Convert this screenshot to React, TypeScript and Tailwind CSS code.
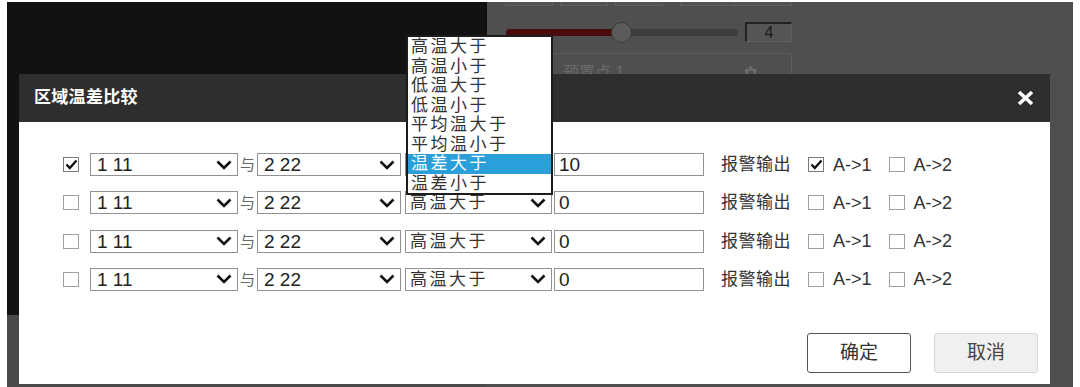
import React from 'react';

const Chevron = () => (
  <svg width="16" height="10" viewBox="0 0 16 10" className="shrink-0">
    <polyline points="1.5,1.5 8,8 14.5,1.5" fill="none" stroke="#111" strokeWidth="2.6" strokeLinejoin="miter" />
  </svg>
);

const Checkbox = ({ checked, className }: { checked?: boolean; className?: string }) => (
  <div
    className={`w-[16px] h-[15px] shrink-0 bg-white border flex items-center justify-center ${
      checked ? 'border-[#7a7a7a]' : 'border-[#a0a0a0]'
    } ${className ?? ''}`}
  >
    {checked && (
      <svg width="13" height="11" viewBox="0 0 13 11">
        <polyline points="1.5,5.5 4.8,9 11.5,1.5" fill="none" stroke="#111" strokeWidth="2.3" />
      </svg>
    )}
  </div>
);

const Select = ({ text, cjk, className }: { text: string; cjk?: boolean; className?: string }) => (
  <div
    className={`h-[23px] shrink-0 bg-white border border-[#929292] flex items-center justify-between pr-[5px] ${
      cjk ? 'pl-[4px] text-[17px] tracking-[2.5px] text-[#333]' : 'pl-[6px] text-[19px] text-[#222]'
    } ${className ?? ''}`}
  >
    <span className="leading-none whitespace-nowrap">{text}</span>
    <Chevron />
  </div>
);

const OPTIONS = ['高温大于', '高温小于', '低温大于', '低温小于', '平均温大于', '平均温小于', '温差大于', '温差小于'];

const ROWS = [
  { checked: true, op: '温差大于', value: '10', a1: true },
  { checked: false, op: '高温大于', value: '0', a1: false },
  { checked: false, op: '高温大于', value: '0', a1: false },
  { checked: false, op: '高温大于', value: '0', a1: false },
];

export default function App() {
  return (
    <div className="relative w-[1080px] h-[387px] overflow-hidden bg-white pt-[2px] px-[7px] font-['Liberation_Sans','Noto_Sans_CJK_SC',sans-serif]">
      {/* background screen */}
      <div className="flex h-full">
        <div className="w-[480px] flex flex-col">
          <div className="h-[313px] bg-[#121212]" />
          <div className="flex-1 bg-[#4a4a4a]" />
        </div>
        <div className="flex-1 bg-[#4f4f4f] flex flex-col">
          <div className="flex h-[4px] pl-[18px]">
            <div className="w-[48px] h-[4px] border border-t-0 border-[#5f5f5f] bg-[#535353]" />
            <div className="ml-[7px] w-[48px] h-[4px] border border-t-0 border-[#5f5f5f] bg-[#535353]" />
            <div className="ml-[7px] w-[48px] h-[4px] border border-t-0 border-[#5f5f5f] bg-[#535353]" />
            <div className="ml-[17px] w-[112px] h-[4px] flex">
              <div className="w-[55px] h-[4px] border border-t-0 border-[#5f5f5f] bg-[#535353]" />
              <div className="w-[57px] h-[4px] border border-t-0 border-l-0 border-[#5f5f5f] bg-[#535353]" />
            </div>
          </div>
          <div className="mt-[16px] h-[20px] flex items-center pl-[19px]">
            <div className="relative w-[232px] h-[7px] rounded-full bg-[#3d3d3d]">
              <div className="h-full w-[112px] rounded-l-full bg-[#4b0b0e]" />
              <div className="absolute left-[105px] top-[-7px] w-[21px] h-[21px] rounded-full bg-[#5b5b5b] border border-[#3b3b3b]" />
            </div>
            <div className="ml-[7px] w-[47px] h-[20px] border-t-2 border-l-2 border-t-[#222] border-l-[#222] border-r border-b border-r-[#5f5f5f] border-b-[#5f5f5f] bg-[#555] text-[#1a1a1a] text-[16px] leading-[17px] text-center">
              4
            </div>
          </div>
          <div className="mt-[11px] ml-[65px] w-[240px] h-[40px] border border-[#5c5c5c] flex items-center justify-between pl-[10px] pr-[32px]">
            <span className="text-[16px] text-[#6a6a6a]">预置点 1</span>
            <svg width="18" height="18" viewBox="0 0 24 24" fill="#6a6a6a">
              <path d="M19.4 13a7.5 7.5 0 0 0 0-2l2.1-1.6-2-3.5-2.5 1a7.6 7.6 0 0 0-1.7-1L15 3h-4l-.4 2.9a7.6 7.6 0 0 0-1.7 1l-2.5-1-2 3.5L6.6 11a7.5 7.5 0 0 0 0 2l-2.1 1.6 2 3.5 2.5-1c.5.4 1.1.7 1.7 1L11 21h4l.4-2.9c.6-.3 1.2-.6 1.7-1l2.5 1 2-3.5zM13 15.5a3.5 3.5 0 1 1 0-7 3.5 3.5 0 0 1 0 7z" />
            </svg>
          </div>
        </div>
      </div>

      {/* dialog */}
      <div className="absolute left-[19px] top-[74px] w-[1031px] h-[310px] flex flex-col">
        <div className="h-[48px] bg-[#2e2e2e] flex items-center justify-between pl-[15px] pr-[15px]">
          <span className="text-white font-bold text-[17px] tracking-[0.3px]">区域温差比较</span>
          <svg width="17" height="16" viewBox="0 0 17 16" className="mr-[1px]">
            <line x1="2" y1="2" x2="15" y2="14" stroke="#fff" strokeWidth="3.6" />
            <line x1="15" y1="2" x2="2" y2="14" stroke="#fff" strokeWidth="3.6" />
          </svg>
        </div>
        <div className="flex-1 bg-white flex flex-col">
          <div className="pt-[31px] flex flex-col gap-[15.3px]">
            {ROWS.map((r, i) => (
              <div key={i} className="flex items-center h-[23px]">
                <Checkbox checked={r.checked} className="ml-[44px]" />
                <Select text="1 11" className="ml-[11px] w-[148px]" />
                <span className="w-[19px] shrink-0 text-center text-[15px] leading-none text-[#666]">与</span>
                <Select text="2 22" className="w-[144px]" />
                <Select text={r.op} cjk className="ml-[4px] w-[147px]" />
                <div className="ml-[2px] w-[150px] h-[23px] shrink-0 border border-[#929292] bg-white flex items-center pl-[4px] text-[19px] text-[#222] leading-none">
                  {r.value}
                </div>
                <span className="ml-[17px] text-[17px] tracking-[0.5px] text-[#333] leading-none whitespace-nowrap">报警输出</span>
                <Checkbox checked={r.a1} className="ml-[17px]" />
                <span className="ml-[9px] text-[18px] text-[#333] leading-none">A-&gt;1</span>
                <Checkbox className="ml-[17px]" />
                <span className="ml-[9px] text-[18px] text-[#333] leading-none">A-&gt;2</span>
              </div>
            ))}
          </div>
          <div className="mt-auto flex justify-end gap-[23px] pr-[12px] pb-[11px]">
            <button className="w-[104px] h-[40px] rounded-[3px] border border-[#555] bg-white text-[19px] text-[#333]">
              确定
            </button>
            <button className="w-[104px] h-[40px] rounded-[3px] border border-[#d6d6d6] bg-[#f0f0f0] text-[19px] text-[#444]">
              取消
            </button>
          </div>
        </div>
      </div>

      {/* open dropdown list */}
      <div className="absolute left-[406px] top-[35px] w-[147px] h-[160px] border-2 border-[#1c1c1c] bg-white flex flex-col">
        {OPTIONS.map((o, i) => (
          <div
            key={o}
            className={`h-[19.5px] leading-[19.5px] text-[17px] tracking-[2.5px] pl-[3px] whitespace-nowrap ${
              i === 6 ? 'bg-[#2a9fd9] text-white' : 'text-[#333]'
            }`}
          >
            {o}
          </div>
        ))}
      </div>
    </div>
  );
}
